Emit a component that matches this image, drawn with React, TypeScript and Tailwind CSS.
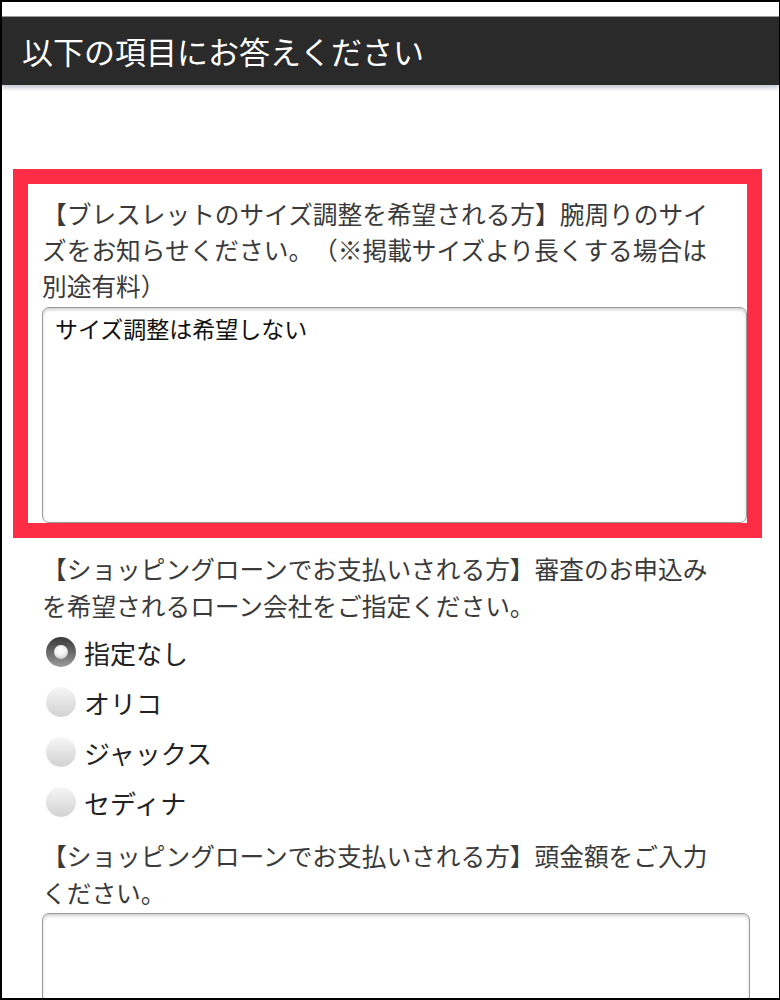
const loanOptions = [
  { label: '指定なし', checked: true },
  { label: 'オリコ', checked: false },
  { label: 'ジャックス', checked: false },
  { label: 'セディナ', checked: false },
]

function Radio({ checked }: { checked: boolean }) {
  if (checked) {
    return (
      <span className="flex h-[30px] w-[30px] shrink-0 items-center justify-center rounded-full bg-linear-to-b from-[#3a3a3a] to-[#9c9c9c]">
        <span className="h-[14px] w-[14px] rounded-full bg-[radial-gradient(circle_at_45%_35%,#ffffff_0%,#f2f2f2_45%,#a9a9a9_100%)]" />
      </span>
    )
  }
  return (
    <span className="h-[30px] w-[30px] shrink-0 rounded-full bg-linear-to-b from-[#f6f6f6] to-[#d2d2d2]" />
  )
}

function Field({ children, className = '' }: { children?: React.ReactNode; className?: string }) {
  return (
    <div
      className={
        'rounded-[7px] border-[1.5px] border-[#9a9a9a] bg-white px-[12px] pt-[5px] text-[23px] leading-[30px] text-[#111] shadow-[inset_0_2px_3px_rgba(0,0,0,0.18)] ' +
        className
      }
    >
      {children}
    </div>
  )
}

export default function App() {
  return (
    <div className="h-[1000px] w-[780px] overflow-hidden border-t-2 border-b-2 border-l-2 border-r border-black bg-white font-['Noto_Sans_CJK_JP','Noto_Sans',sans-serif] [text-spacing-trim:space-all]">
      <header className="mt-[14px] flex h-[69px] items-center border-t border-[#9a9a9a] bg-[#2a2a2a] pl-[20px] text-[31px] text-white shadow-[0_3px_4px_rgba(110,120,150,0.4)]">
        以下の項目にお答えください
      </header>

      {/* highlighted question */}
      <div className="ml-[11px] mt-[84px] w-[749px] border-[15px] border-[#fe2d45]">
        <div className="pl-[14px] pt-[11px]">
          <p className="text-[24.7px] leading-[36px] whitespace-nowrap text-[#3a3a3a]">
            【ブレスレットのサイズ調整を希望される方】腕周りのサイ
            <br />
            ズをお知らせください。（※掲載サイズより長くする場合は
            <br />
            別途有料）
          </p>
          <Field className="mt-[4px] h-[216px]">サイズ調整は希望しない</Field>
        </div>
      </div>

      <div className="pl-[40px]">
        <p className="mt-[12px] text-[24.7px] leading-[37px] whitespace-nowrap text-[#3a3a3a]">
          【ショッピングローンでお支払いされる方】審査のお申込み
          <br />
          を希望されるローン会社をご指定ください。
        </p>

        <div className="mt-[3px] flex flex-col">
          {loanOptions.map((o) => (
            <label key={o.label} className="flex h-[50px] items-center gap-[8px] pl-[4px]">
              <Radio checked={o.checked} />
              <span className="text-[26px] text-[#222]">{o.label}</span>
            </label>
          ))}
        </div>

        <p className="mt-[10px] text-[24.7px] leading-[37px] whitespace-nowrap text-[#3a3a3a]">
          【ショッピングローンでお支払いされる方】頭金額をご入力
          <br />
          ください。
        </p>
        <Field className="mt-[2px] h-[216px] w-[708px]" />
      </div>
    </div>
  )
}
